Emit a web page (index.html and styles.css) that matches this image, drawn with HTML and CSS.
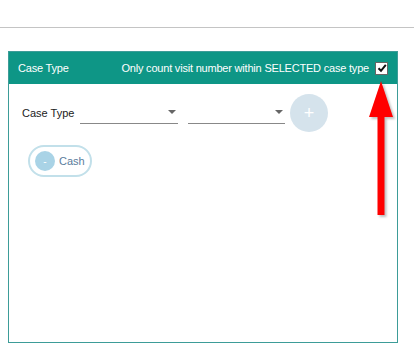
FILE: index.html
```html
<!DOCTYPE html>
<html lang="en">
<head>
    <meta charset="UTF-8">
    <meta name="viewport" content="width=device-width, initial-scale=1.0">
    <title>Case Type</title>
    <link rel="stylesheet" href="styles.css">
</head>
<body>
    <div class="topbar"></div>

    <section class="panel">
        <div class="panel-header">
            <span class="panel-title">Case Type</span>
            <label class="only-count">
                Only count visit number within SELECTED case type
                <span class="checkbox">
                    <svg width="10" height="10" viewBox="0 0 10 10">
                        <path d="M1.5 5.2 L4 7.8 L8.8 1.8" fill="none" stroke="#111" stroke-width="2"/>
                    </svg>
                </span>
            </label>
        </div>

        <div class="panel-body">
            <div class="filter-row">
                <span class="filter-label">Case Type</span>
                <div class="select"><span class="caret"></span></div>
                <div class="select"><span class="caret"></span></div>
                <button class="add-btn" type="button">+</button>
            </div>

            <div class="chips">
                <span class="chip">
                    <span class="chip-remove">-</span>
                    Cash
                </span>
            </div>
        </div>
    </section>

    <!-- annotation arrow pointing at the checkbox -->
    <svg class="arrow" width="40" height="150" viewBox="0 0 40 150">
        <polygon points="18,2 30,38 21.5,38 21.5,136 14.5,136 14.5,38 6,38" fill="#ff0000"/>
    </svg>
</body>
</html>
```

FILE: styles.css
```css
* {
    margin: 0;
    padding: 0;
    box-sizing: border-box;
}

body {
    background-color: #fff;
    font-family: 'Liberation Sans', Arial, sans-serif;
    color: #222;
    position: relative;
    width: 414px;
    height: 361px;
    overflow: hidden;
}

.topbar {
    height: 28px;
    border-bottom: 1px solid #c4c4c4;
}

.panel {
    margin: 23px 0 0 8px;
    width: 390px;
    height: 292px;
    border: 1px solid #3d9c98;
    display: flex;
    flex-direction: column;
}

.panel-header {
    height: 32px;
    background-color: #0e9686;
    color: #fff;
    display: flex;
    justify-content: space-between;
    align-items: center;
    padding: 0 9px 0 9px;
    font-size: 11px;
    letter-spacing: -0.2px;
}

.only-count {
    display: flex;
    align-items: center;
    gap: 6px;
}

.checkbox {
    width: 13px;
    height: 13px;
    background-color: #fff;
    border: 1px solid #666;
    display: flex;
    align-items: center;
    justify-content: center;
}

.panel-body {
    padding: 9px 0 0 13px;
}

.filter-row {
    display: flex;
    align-items: center;
    height: 40px;
}

.filter-label {
    font-size: 11px;
    width: 58px;
    color: #222;
}

.select {
    position: relative;
    width: 98px;
    height: 16px;
    border-bottom: 1px solid #888;
    margin-top: 6px;
    margin-right: 10px;
}

.select + .select {
    width: 97px;
    margin-right: 5px;
}

.caret {
    position: absolute;
    right: 2px;
    top: 2px;
    border-left: 4px solid transparent;
    border-right: 4px solid transparent;
    border-top: 4px solid #666;
}

.add-btn {
    width: 38px;
    height: 38px;
    border-radius: 50%;
    border: none;
    background-color: #d5e3ec;
    color: #fff;
    font-size: 18px;
    font-family: 'Liberation Sans', Arial, sans-serif;
    line-height: 38px;
}

.chips {
    display: flex;
    padding: 12px 0 0 6px;
}

.chip {
    display: flex;
    align-items: center;
    gap: 4px;
    height: 32px;
    padding: 0 5px 0 5px;
    border: 2px solid #c2e0ea;
    border-radius: 16px;
    font-size: 11px;
    color: #5a7c9c;
}

.chip-remove {
    width: 20px;
    height: 20px;
    border-radius: 50%;
    background-color: #a9d3e6;
    color: #fff;
    font-size: 10px;
    display: flex;
    align-items: center;
    justify-content: center;
}

.arrow {
    position: absolute;
    left: 363px;
    top: 79px;
    filter: drop-shadow(2px 2px 1px rgba(0, 0, 0, 0.25));
}
```
